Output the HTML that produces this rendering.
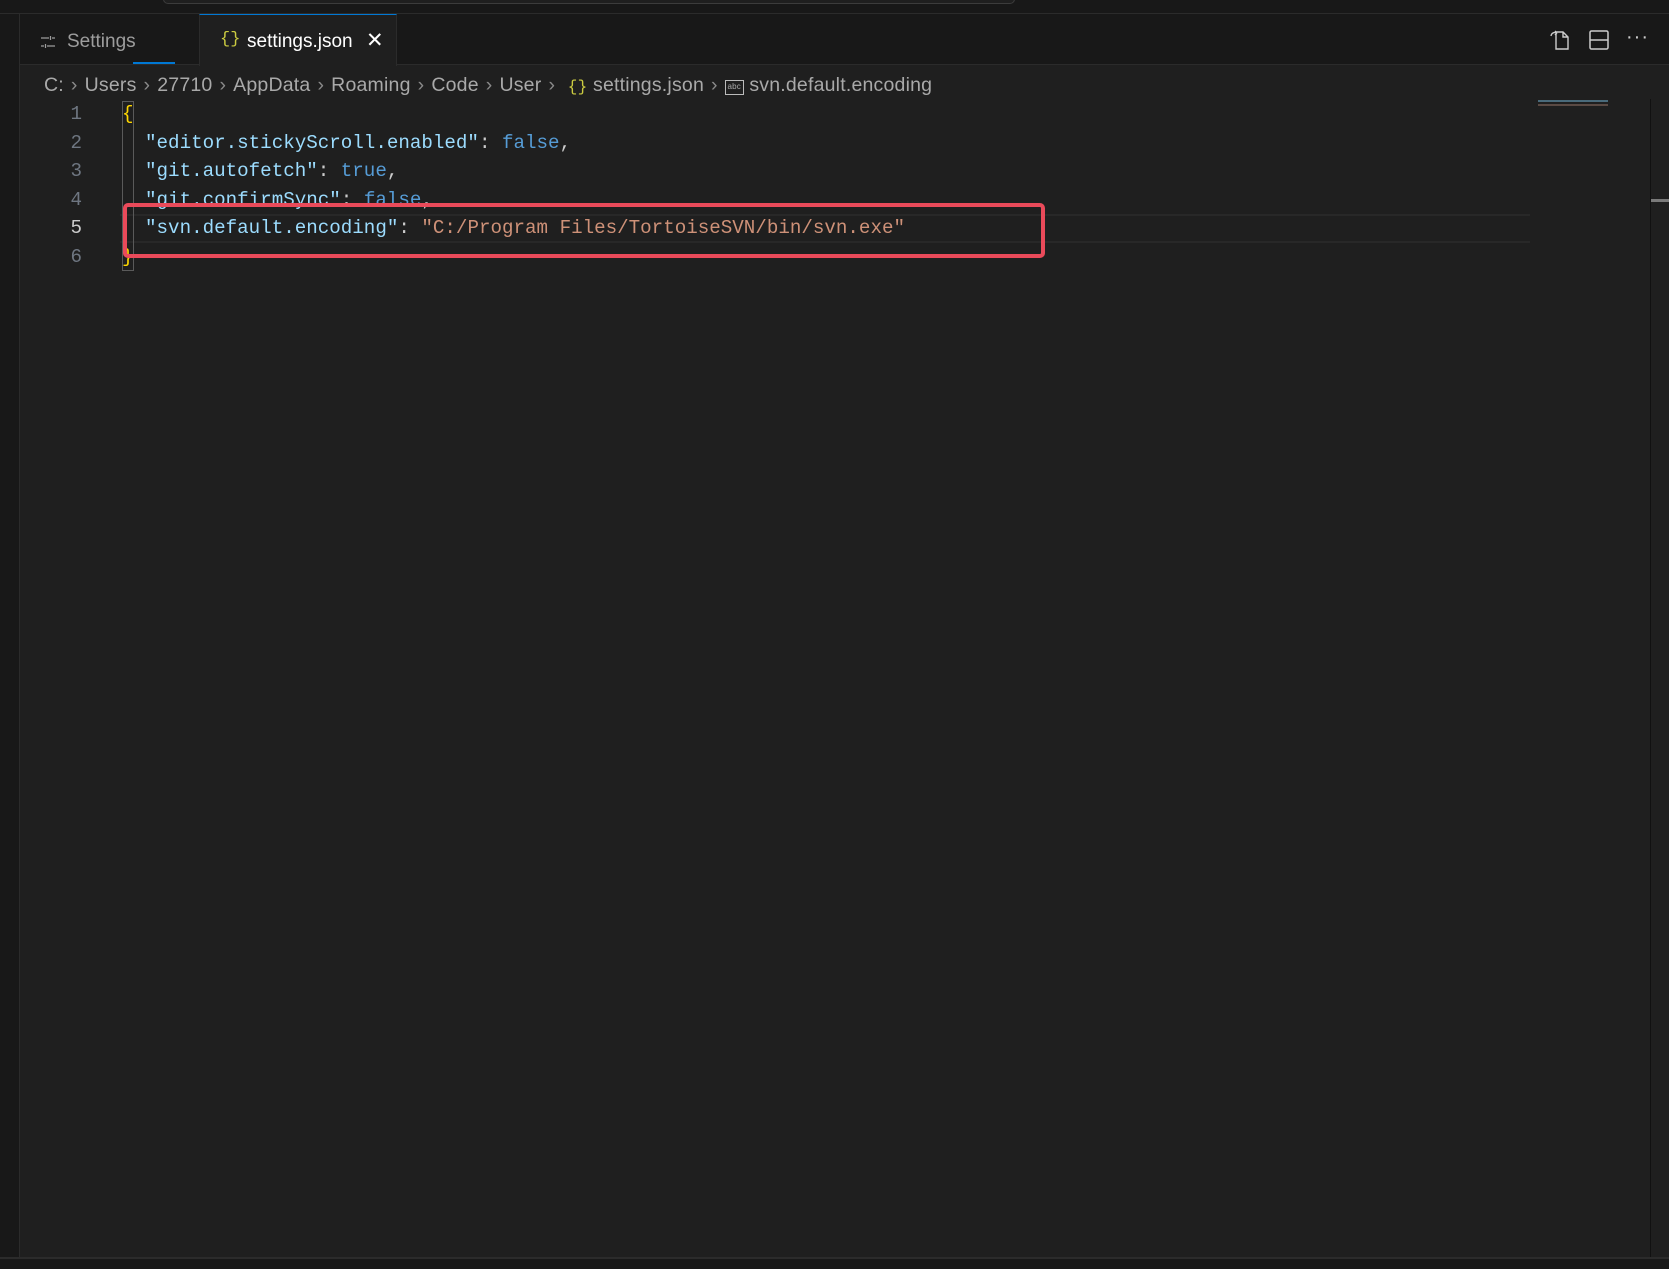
<!DOCTYPE html>
<html><head><meta charset="utf-8"><style>
*{margin:0;padding:0;box-sizing:border-box}
body{width:1669px;height:1269px;background:#1f1f1f;position:relative;overflow:hidden;font-family:"Liberation Sans",sans-serif;color:#ccc}
.abs{position:absolute}
.code{font-family:"Liberation Mono",monospace;font-size:19.2px;white-space:pre;line-height:28.6px}
.k{color:#9cdcfe}.b{color:#569cd6}.s{color:#ce9178}.p{color:#ccc}
.ln{width:40px;text-align:right;color:#6e7681;left:42px}
.bc{top:74px;left:44px;font-size:19.5px;color:#a9a9a9;white-space:nowrap;letter-spacing:0.2px}
.bc span.c{color:#8a8a8a;margin:0 7px}
</style></head><body>
<div class="abs" style="left:0;top:0;width:1669px;height:14px;background:#181818;border-bottom:1px solid #2b2b2b"></div>
<div class="abs" style="left:163px;top:-6px;width:852px;height:10px;border:1px solid #3c3c3c;border-radius:6px;background:#1f1f1f"></div>
<div class="abs" style="left:0;top:14px;width:20px;height:1255px;background:#181818;border-right:1px solid #2b2b2b"></div>
<div class="abs" style="left:20px;top:14px;width:1649px;height:51px;background:#181818;border-bottom:1px solid #2b2b2b"></div>
<div class="abs" style="left:199px;top:14px;width:198px;height:52px;background:#1f1f1f;border-top:1px solid #0078d4;border-left:1px solid #2b2b2b;border-right:1px solid #2b2b2b"></div>
<div class="abs" style="left:133px;top:62px;width:42px;height:2px;background:#0078d4"></div>
<svg class="abs" style="left:40px;top:34px" width="16" height="16" viewBox="0 0 16 16" fill="none" stroke="#9d9d9d" stroke-width="1.2"><path d="M1 4h8M12 4h3M10.5 2v4M1 12h3M7 12h8M5.5 10v4"/></svg>
<div class="abs" style="left:67px;top:31px;font-size:19px;color:#9d9d9d">Settings</div>
<div class="abs" style="left:220px;top:30px;font-size:17px;color:#cbcb41;font-family:'Liberation Mono',monospace">{}</div>
<div class="abs" style="left:247px;top:31px;font-size:19px;color:#fff">settings.json</div>
<div class="abs" style="left:366px;top:28px;font-size:21px;color:#fff">✕</div>
<svg class="abs" style="left:1548px;top:28px" width="24" height="24" viewBox="0 0 24 24" fill="none" stroke="#ccc" stroke-width="1.4"><path d="M8 4h7l5 5v12H8z M15 4v5h5 M3 8a4 4 0 0 1 6-3 M9 5l-2-2M9 5l-2 2"/></svg>
<svg class="abs" style="left:1588px;top:29px" width="22" height="22" viewBox="0 0 22 22" fill="none" stroke="#ccc" stroke-width="1.5"><rect x="2" y="2" width="18" height="18" rx="1.5"/><path d="M2 11h18"/></svg>
<div class="abs" style="left:1626px;top:26px;font-size:20px;color:#ccc;letter-spacing:1px">···</div>
<div class="abs bc">C:<span class="c">›</span>Users<span class="c">›</span>27710<span class="c">›</span>AppData<span class="c">›</span>Roaming<span class="c">›</span>Code<span class="c">›</span>User<span class="c">›</span> <span style="color:#cbcb41;font-family:'Liberation Mono',monospace;font-size:16px">{}</span> settings.json<span class="c">›</span><span style="display:inline-block;width:19px;height:15px;border:1.5px solid #bbb;font-size:8px;line-height:11px;text-align:center;vertical-align:2px">abc</span> svn.default.encoding</div>
<div class="abs" style="left:120px;top:214px;width:1410px;height:29px;border-top:2px solid #282828;border-bottom:2px solid #282828"></div>
<div class="abs code ln" style="top:100px">1
2
3
4
<span style="color:#ccc">5</span>
6</div>
<div class="abs" style="left:122px;top:101px;width:12px;height:170px;border:1px solid #5a5a5a"></div>
<div class="abs code" style="left:122px;top:100px"><span style="color:#ffd700">{</span>
  <span class="k">"editor.stickyScroll.enabled"</span><span class="p">: </span><span class="b">false</span><span class="p">,</span>
  <span class="k">"git.autofetch"</span><span class="p">: </span><span class="b">true</span><span class="p">,</span>
  <span class="k">"git.confirmSync"</span><span class="p">: </span><span class="b">false</span><span class="p">,</span>
  <span class="k">"svn.default.encoding"</span><span class="p">: </span><span class="s">"C:/Program Files/TortoiseSVN/bin/svn.exe"</span>
<span style="color:#ffd700">}</span></div>
<div class="abs" style="left:123px;top:203px;width:922px;height:55px;border:4px solid #ea4a5a;border-radius:5px"></div>
<div class="abs" style="left:1538px;top:100px;width:70px;height:2px;background:#4a6a7a"></div>
<div class="abs" style="left:1538px;top:104px;width:70px;height:2px;background:#5a4a44"></div>
<div class="abs" style="left:1650px;top:99px;width:1px;height:1160px;background:#111"></div>
<div class="abs" style="left:1651px;top:199px;width:18px;height:3px;background:#7a7a7a"></div>
<div class="abs" style="left:0;top:1257px;width:1669px;height:12px;background:#181818;border-top:2px solid #2b2b2b"></div>
</body></html>
